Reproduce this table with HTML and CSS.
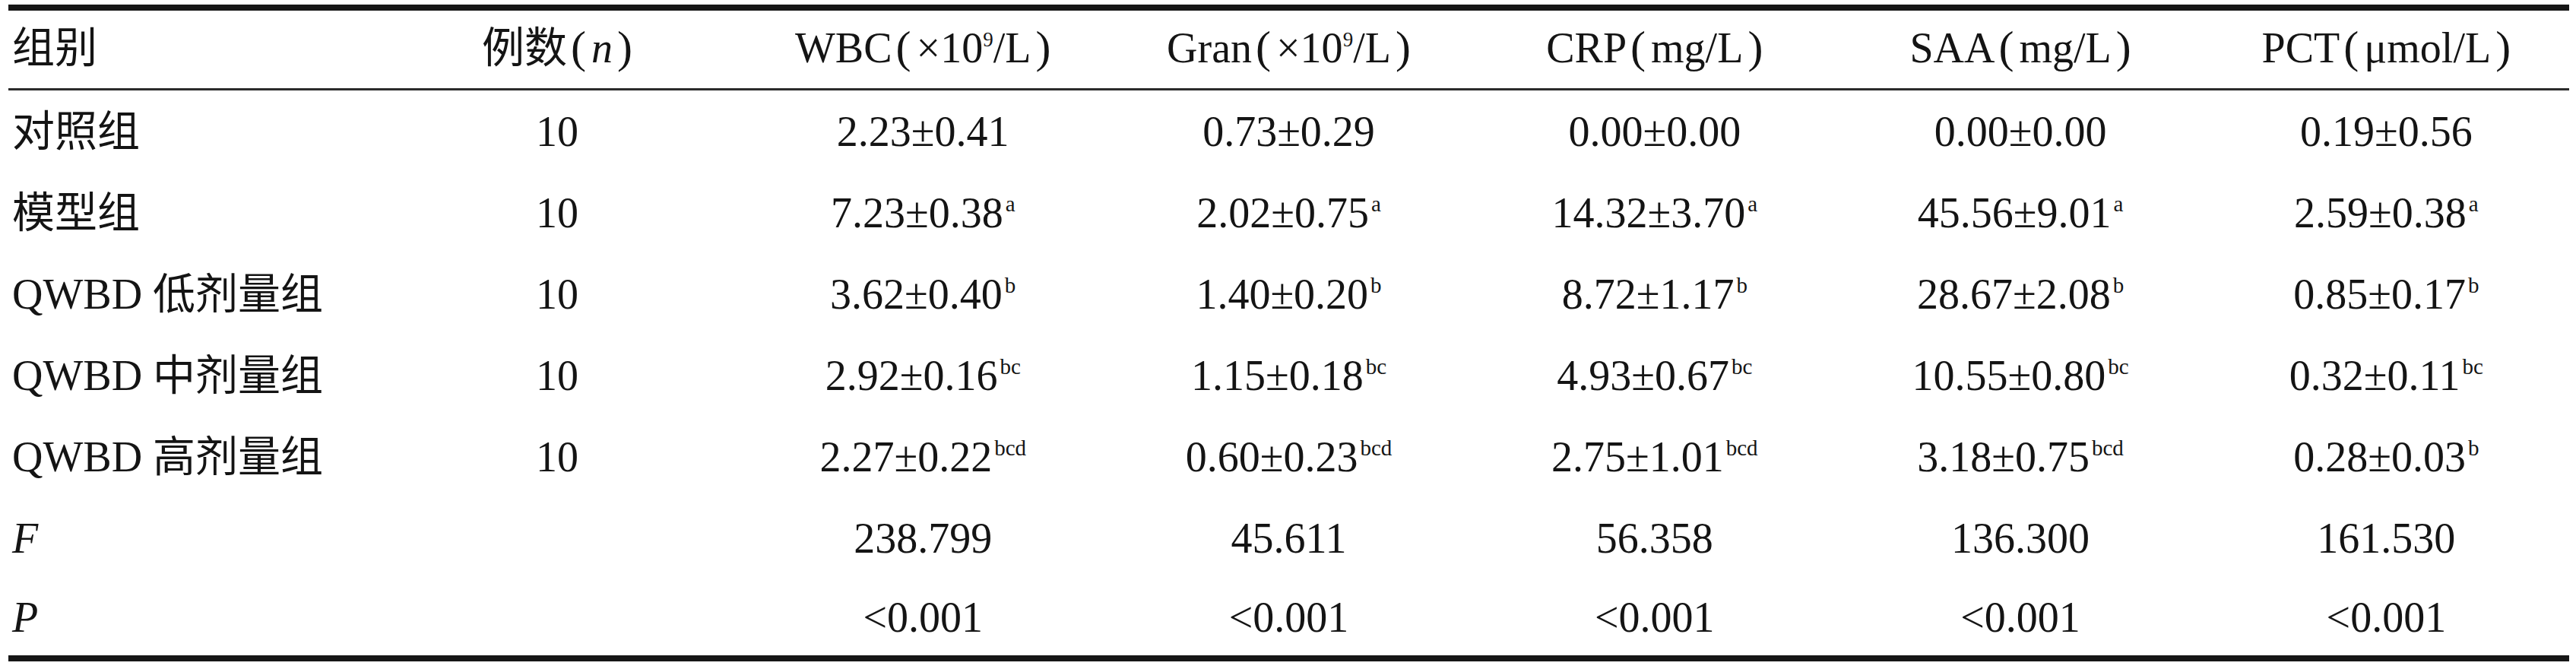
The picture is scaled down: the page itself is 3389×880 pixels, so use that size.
FILE: index.html
```
<!DOCTYPE html>
<html lang="zh-CN">
<head>
<meta charset="utf-8">
<title>表</title>
<link rel="stylesheet" href="styles.css">
</head>
<body>
<div class="table">
  <div class="row head">
    <div class="cell first">组别</div>
    <div class="cell">例数<span class="lp">(</span><i>n</i><span class="rp">)</span></div>
    <div class="cell">WBC<span class="lp">(</span>×10<sup class="exp">9</sup>/L<span class="rp">)</span></div>
    <div class="cell">Gran<span class="lp">(</span>×10<sup class="exp">9</sup>/L<span class="rp">)</span></div>
    <div class="cell">CRP<span class="lp">(</span>mg/L<span class="rp">)</span></div>
    <div class="cell">SAA<span class="lp">(</span>mg/L<span class="rp">)</span></div>
    <div class="cell">PCT<span class="lp">(</span>μmol/L<span class="rp">)</span></div>
  </div>
  <div class="row">
    <div class="cell first">对照组</div>
    <div class="cell">10</div>
    <div class="cell">2.23±0.41</div>
    <div class="cell">0.73±0.29</div>
    <div class="cell">0.00±0.00</div>
    <div class="cell">0.00±0.00</div>
    <div class="cell">0.19±0.56</div>
  </div>
  <div class="row">
    <div class="cell first">模型组</div>
    <div class="cell">10</div>
    <div class="cell">7.23±0.38<sup class="sig">a</sup></div>
    <div class="cell">2.02±0.75<sup class="sig">a</sup></div>
    <div class="cell">14.32±3.70<sup class="sig">a</sup></div>
    <div class="cell">45.56±9.01<sup class="sig">a</sup></div>
    <div class="cell">2.59±0.38<sup class="sig">a</sup></div>
  </div>
  <div class="row">
    <div class="cell first">QWBD 低剂量组</div>
    <div class="cell">10</div>
    <div class="cell">3.62±0.40<sup class="sig">b</sup></div>
    <div class="cell">1.40±0.20<sup class="sig">b</sup></div>
    <div class="cell">8.72±1.17<sup class="sig">b</sup></div>
    <div class="cell">28.67±2.08<sup class="sig">b</sup></div>
    <div class="cell">0.85±0.17<sup class="sig">b</sup></div>
  </div>
  <div class="row">
    <div class="cell first">QWBD 中剂量组</div>
    <div class="cell">10</div>
    <div class="cell">2.92±0.16<sup class="sig">bc</sup></div>
    <div class="cell">1.15±0.18<sup class="sig">bc</sup></div>
    <div class="cell">4.93±0.67<sup class="sig">bc</sup></div>
    <div class="cell">10.55±0.80<sup class="sig">bc</sup></div>
    <div class="cell">0.32±0.11<sup class="sig">bc</sup></div>
  </div>
  <div class="row">
    <div class="cell first">QWBD 高剂量组</div>
    <div class="cell">10</div>
    <div class="cell">2.27±0.22<sup class="sig">bcd</sup></div>
    <div class="cell">0.60±0.23<sup class="sig">bcd</sup></div>
    <div class="cell">2.75±1.01<sup class="sig">bcd</sup></div>
    <div class="cell">3.18±0.75<sup class="sig">bcd</sup></div>
    <div class="cell">0.28±0.03<sup class="sig">b</sup></div>
  </div>
  <div class="row">
    <div class="cell first"><i>F</i></div>
    <div class="cell"></div>
    <div class="cell">238.799</div>
    <div class="cell">45.611</div>
    <div class="cell">56.358</div>
    <div class="cell">136.300</div>
    <div class="cell">161.530</div>
  </div>
  <div class="row last">
    <div class="cell first"><i>P</i></div>
    <div class="cell"></div>
    <div class="cell">&lt;0.001</div>
    <div class="cell">&lt;0.001</div>
    <div class="cell">&lt;0.001</div>
    <div class="cell">&lt;0.001</div>
    <div class="cell">&lt;0.001</div>
  </div>
</div>
</body>
</html>
```

FILE: styles.css
```
html, body {
  margin: 0;
  padding: 0;
  background: #ffffff;
}

body {
  padding: 6px 0 0 11px;
  font-family: "Liberation Serif", "Noto Sans CJK SC", serif;
  color: #141414;
}

.table {
  width: 3369px;
  border-top: 8px solid #161616;
  border-bottom: 8px solid #161616;
}

.row {
  display: grid;
  grid-template-columns: repeat(7, 1fr);
  align-items: center;
  height: 107px;
}

.row.head {
  height: 98px;
  padding-bottom: 4px;
  border-bottom: 3px solid #2b2b2b;
}

.row.last {
  height: 101px;
}

.cell {
  font-size: 56px;
  line-height: 1;
  text-align: center;
  white-space: nowrap;
}

.cell.first {
  text-align: left;
  padding-left: 5px;
}

.cell i {
  font-style: italic;
}

.lp,
.rp {
  font-size: 60px;
  line-height: 0;
}

.lp {
  margin: 0 7px 0 5px;
}

.rp {
  margin-left: 6px;
}

.sig {
  font-size: 29px;
  line-height: 0;
  vertical-align: 21px;
  margin-left: 3px;
}

.exp {
  font-size: 27px;
  line-height: 0;
  vertical-align: 21px;
}
```
